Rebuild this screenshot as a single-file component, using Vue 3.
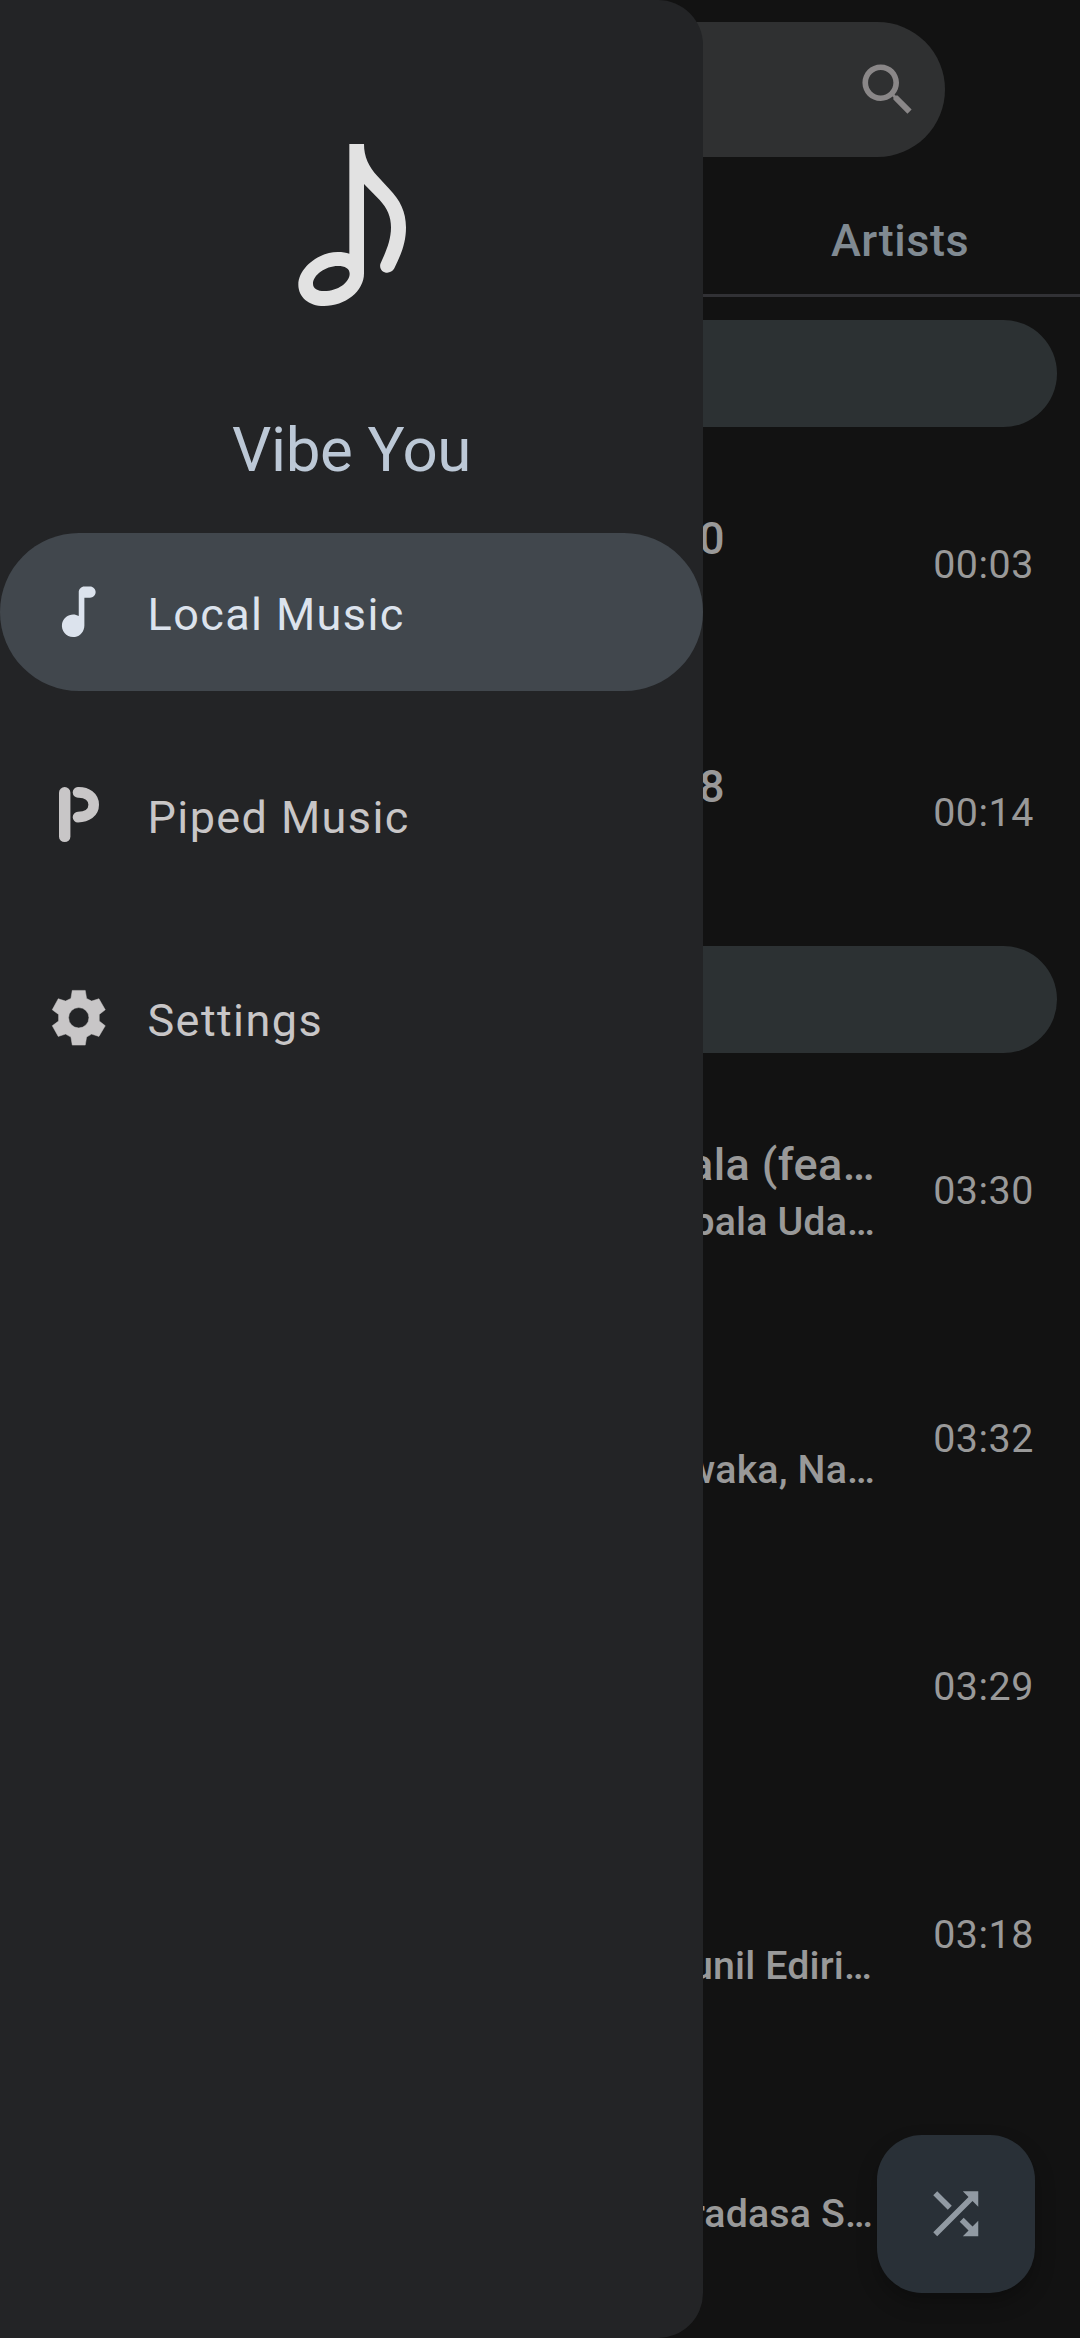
<script setup>
const navItems = [
  { id: 'local', label: 'Local Music', active: true },
  { id: 'piped', label: 'Piped Music', active: false },
  { id: 'settings', label: 'Settings', active: false },
]

// `end` is the distance from the right edge of the text column
const groups = [
  [
    { title: '0', artist: '', time: '00:03', end: 150 },
    { title: '8', artist: '', time: '00:14', end: 150 },
  ],
  [
    { title: 'ala (fea…', artist: 'pala Uda…', time: '03:30', end: 0 },
    { title: '', artist: 'waka, Na…', time: '03:32', end: 0 },
    { title: '', artist: '', time: '03:29', end: 0 },
    { title: '', artist: 'unil Ediri…', time: '03:18', end: 3 },
    { title: '', artist: 'radasa S…', time: '', end: 2 },
  ],
]
</script>

<template>
  <div class="app">
    <main class="page">
      <div class="search">
        <svg class="icon" viewBox="0 0 24 24"><path fill="currentColor" d="M15.5 14h-.79l-.28-.27C15.41 12.59 16 11.11 16 9.5 16 5.91 13.09 3 9.5 3S3 5.91 3 9.5 5.91 16 9.5 16c1.61 0 3.09-.59 4.23-1.57l.27.28v.79l5 4.99L20.49 19l-4.99-5zm-6 0C7.01 14 5 11.99 5 9.5S7.01 5 9.5 5 14 7.01 14 9.5 11.99 14 9.5 14z" /></svg>
      </div>
      <div class="tabs">
        <div class="tab">Artists</div>
      </div>
      <section v-for="(rows, g) in groups" :key="g" class="group">
        <div class="group-head"></div>
        <div v-for="(row, i) in rows" :key="i" class="row">
          <div class="info" :style="{ paddingRight: row.end + 'px' }">
            <div class="title">{{ row.title }}</div>
            <div class="artist">{{ row.artist }}</div>
          </div>
          <div class="time">{{ row.time }}</div>
        </div>
      </section>
    </main>

    <button class="fab">
      <svg class="icon" viewBox="0 0 24 24"><path fill="currentColor" d="M10.59 9.17L5.41 4 4 5.41l5.17 5.17 1.42-1.41zM14.5 4l2.04 2.04L4 18.59 5.41 20 17.96 7.46 20 9.5V4h-5.5zm.33 9.41l-1.41 1.41 3.13 3.13L14.5 20H20v-5.5l-2.04 2.04-3.13-3.13z" /></svg>
    </button>

    <aside class="drawer">
      <svg class="logo" viewBox="0 0 510 600">
        <path fill="currentColor" fill-rule="evenodd" d="M238 72H282C282 110 296 140 322 168L358 207C390 240 408 275 408 322C408 372 392 405 373 445C361 468 325 459 331 432C345 400 363 365 363 322C363 290 352 265 329 240L282 192V460C282 515 225 558 162 558C115 558 85 530 85 494C85 445 145 396 203 396C217 396 229 398 238 401ZM239 461C239 446 225 438 204 438C165 438 129 466 129 491C129 506 143 513 163 513C203 513 239 487 239 461Z" />
      </svg>
      <h1 class="brand">Vibe You</h1>
      <nav class="nav">
        <a v-for="item in navItems" :key="item.id" class="nav-item" :class="{ active: item.active }">
          <svg v-if="item.id === 'local'" class="icon" viewBox="0 0 24 24"><path fill="currentColor" d="M12 5v8.55c-.94-.54-2.1-.75-3.33-.32-1.34.48-2.37 1.67-2.61 3.07-.46 2.74 1.86 5.08 4.59 4.65 1.96-.31 3.35-2.11 3.35-4.1V7h2c1.1 0 2-.9 2-2s-.9-2-2-2h-2c-1.1 0-2 .9-2 2z" /></svg>
          <svg v-else-if="item.id === 'piped'" class="icon" viewBox="0 0 67.5 67.5" fill="none" stroke="currentColor" stroke-linecap="round">
            <path stroke-width="11.4" d="M19.7 11.8V55.4" />
            <path stroke-width="10.6" d="M33 11.4C42 11.1 48.7 16 48.7 23.8S42 36 33 36.1" />
          </svg>
          <svg v-else class="icon" viewBox="136.25 672.75 202.5 202.5"><path fill="currentColor" fill-rule="evenodd" stroke="currentColor" stroke-width="1.5" stroke-linejoin="round" d="M218 692H257L261 716L276 724L298 717L317 750L299 764V784L317 798L298 830L276 823L261 832L257 856H218L214 832L198 823L176 830L158 798L177 784V764L158 750L176 717L198 724L214 716ZM237.500 743.500A30.500 30.500 0 1 0 237.500 804.500A30.500 30.500 0 1 0 237.500 743.500Z" /></svg>
          <span>{{ item.label }}</span>
        </a>
      </nav>
    </aside>
  </div>
</template>

<style>
body {
  margin: 0;
  background: #121212;
}
</style>

<style scoped>
.app {
  position: relative;
  width: 1080px;
  height: 2338px;
  overflow: hidden;
  background: #121212;
  font-family: Roboto, 'Noto Sans', sans-serif;
}
.icon {
  display: block;
  flex: none;
  width: 67.5px;
  height: 67.5px;
}
.page {
  display: flex;
  flex-direction: column;
  padding-top: 22px;
}
.search {
  display: flex;
  align-items: center;
  justify-content: flex-end;
  box-sizing: border-box;
  width: 810px;
  height: 135px;
  margin-left: 135px;
  padding-right: 23.5px;
  border-radius: 68px;
  background: #2f3031;
  color: #8a8788;
}
.tabs {
  display: flex;
  justify-content: flex-end;
  height: 137px;
  border-bottom: 3px solid #313135;
}
.tab {
  width: 360px;
  padding-top: 50px;
  box-sizing: border-box;
  text-align: center;
  font-size: 45px;
  line-height: 67px;
  font-weight: 500;
  letter-spacing: 0.5px;
  color: #808a92;
}
.group {
  padding-top: 9px;
}
.group:first-of-type {
  padding-top: 23px;
}
.group-head {
  height: 107px;
  margin: 0 23px 14px;
  border-radius: 54px;
  background: #2c3133;
}
.row {
  display: flex;
  align-items: center;
  justify-content: space-between;
  height: 248px;
  padding-right: 46px;
}
.info {
  box-sizing: border-box;
  width: 875px;
  text-align: right;
  font-weight: 500;
  white-space: nowrap;
  color: #999;
}
.title {
  height: 62px;
  font-size: 45px;
  line-height: 62px;
  letter-spacing: 0.4px;
}
.artist {
  height: 52px;
  font-size: 39.4px;
  line-height: 52px;
  letter-spacing: 0.12px;
}
.time {
  font-size: 39.4px;
  line-height: 56px;
  letter-spacing: 0.55px;
  color: #999;
}
.fab {
  position: absolute;
  right: 45px;
  bottom: 45px;
  display: flex;
  align-items: center;
  justify-content: center;
  width: 158px;
  height: 158px;
  padding: 0;
  border: 0;
  border-radius: 45px;
  background: #293037;
  color: #919aa3;
  box-shadow: 0 10px 20px rgba(0, 0, 0, 0.25);
}
.drawer {
  position: absolute;
  inset: 0 auto 0 0;
  display: flex;
  flex-direction: column;
  align-items: center;
  box-sizing: border-box;
  width: 703px;
  padding-top: 120px;
  border-radius: 0 45px 45px 0;
  background: #232426;
}
.logo {
  width: 170px;
  height: 200px;
  margin-left: 7px;
  color: #e2e2e2;
}
.brand {
  margin: 91px 0 43px;
  font-size: 61.9px;
  line-height: 79px;
  font-weight: 400;
  letter-spacing: -0.35px;
  color: #bcc8d6;
}
.nav {
  display: flex;
  flex-direction: column;
  gap: 45px;
  width: 100%;
}
.nav-item {
  display: flex;
  align-items: center;
  gap: 35px;
  height: 158px;
  padding-left: 45px;
  border-radius: 79px;
  font-size: 45px;
  line-height: 68px;
  letter-spacing: 1.4px;
  color: #c8c6c7;
}
.nav-item.active {
  background: #41474d;
  color: #dce3ed;
}
.nav-item span {
  padding-top: 6px;
}
</style>
